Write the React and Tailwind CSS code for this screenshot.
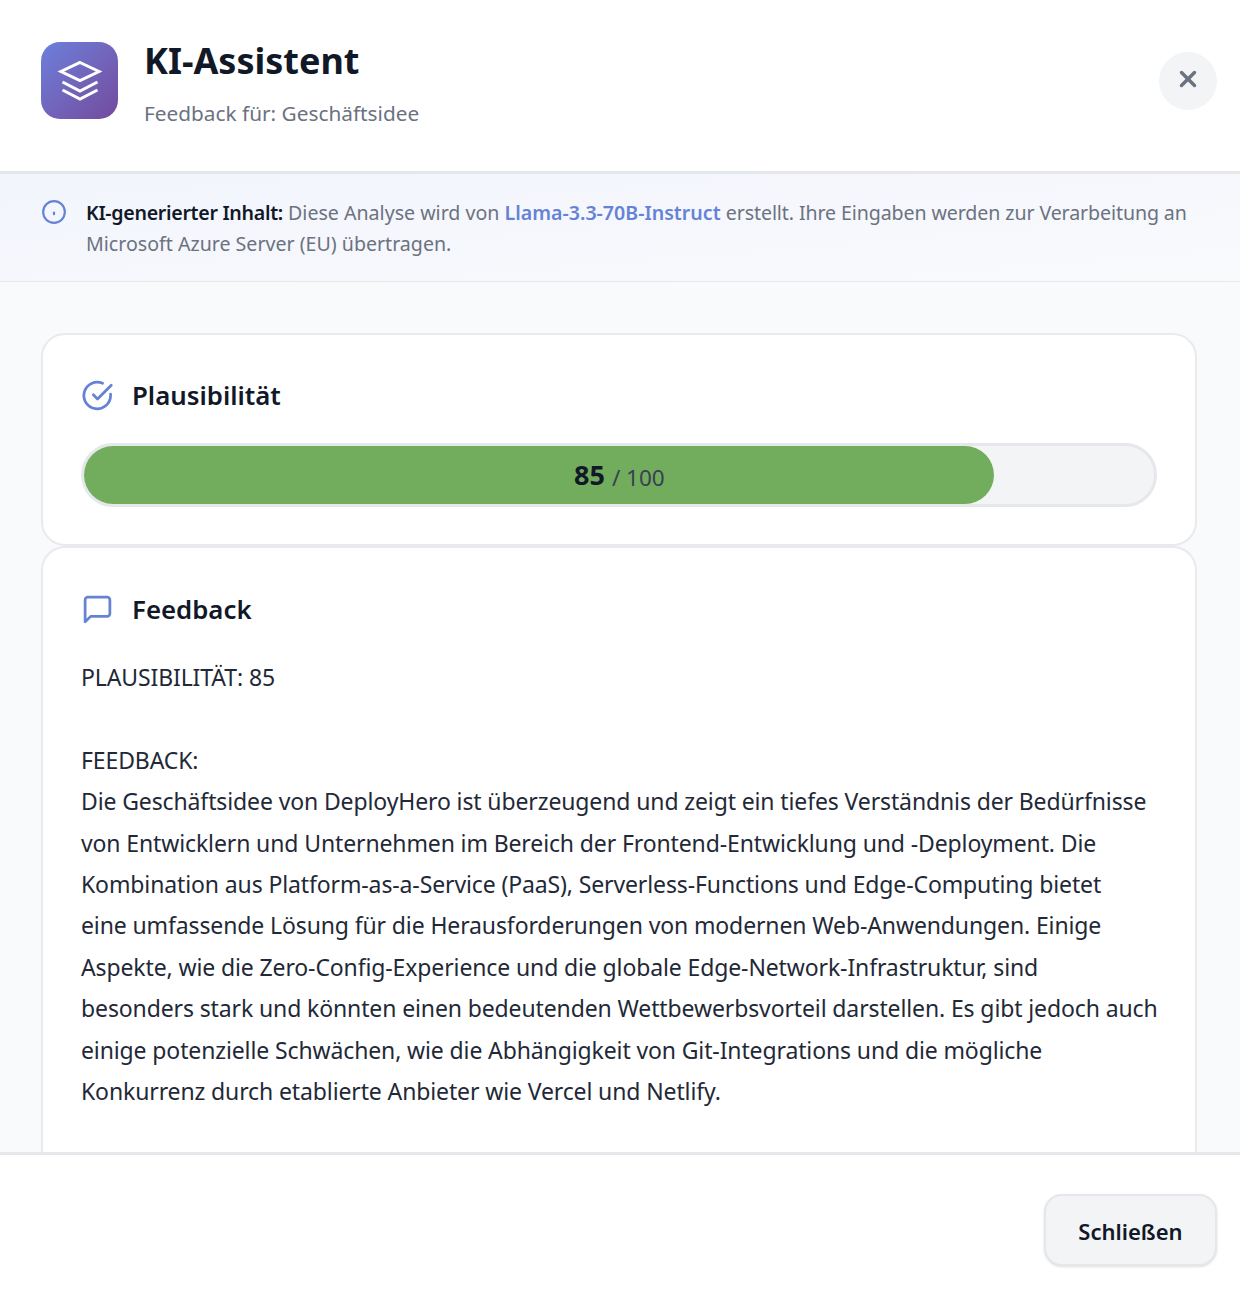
const feedbackLines = [
  "Die Geschäftsidee von DeployHero ist überzeugend und zeigt ein tiefes Verständnis der Bedürfnisse",
  "von Entwicklern und Unternehmen im Bereich der Frontend-Entwicklung und -Deployment. Die",
  "Kombination aus Platform-as-a-Service (PaaS), Serverless-Functions und Edge-Computing bietet",
  "eine umfassende Lösung für die Herausforderungen von modernen Web-Anwendungen. Einige",
  "Aspekte, wie die Zero-Config-Experience und die globale Edge-Network-Infrastruktur, sind",
  "besonders stark und könnten einen bedeutenden Wettbewerbsvorteil darstellen. Es gibt jedoch auch",
  "einige potenzielle Schwächen, wie die Abhängigkeit von Git-Integrations und die mögliche",
  "Konkurrenz durch etablierte Anbieter wie Vercel und Netlify.",
];

function LayersIcon() {
  return (
    <svg width="46" height="46" viewBox="0 0 46 46" fill="none" stroke="white" strokeWidth="3">
      <path d="M23 4.5 L42 13.5 L23 22.5 L4 13.5 Z" />
      <path d="M5.5 24 L23 33 L40.5 24" />
      <path d="M5.5 32 L23 41 L40.5 32" />
    </svg>
  );
}

function CheckCircleIcon() {
  return (
    <svg width="33" height="33" viewBox="0 0 24 24" fill="none" stroke="#6583d6" strokeWidth="2" strokeLinecap="round" strokeLinejoin="round">
      <path d="M21.5 11v1a9.7 9.7 0 1 1-5.8-8.9" />
      <path d="M22 4.5 12 14.5l-3-3" />
    </svg>
  );
}

function BubbleIcon() {
  return (
    <svg width="33" height="33" viewBox="0 0 24 24" fill="none" stroke="#6583d6" strokeWidth="2" strokeLinecap="round" strokeLinejoin="round">
      <path d="M21 15a2 2 0 0 1-2 2H7l-4 4V5a2 2 0 0 1 2-2h14a2 2 0 0 1 2 2z" />
    </svg>
  );
}

function InfoIcon() {
  return (
    <svg width="26" height="26" viewBox="0 0 24 24" fill="none" stroke="#6583d6" strokeWidth="2" strokeLinecap="round">
      <circle cx="12" cy="12" r="10" />
      <path d="M12 12.5v1.5" />
    </svg>
  );
}

function CloseIcon() {
  return (
    <svg width="26" height="26" viewBox="0 0 24 24" fill="none" stroke="#6b7280" strokeWidth="3.2" strokeLinecap="round">
      <path d="M18 6 6 18" />
      <path d="m6 6 12 12" />
    </svg>
  );
}

export default function App() {
  return (
    <div className="flex h-[1298px] flex-col overflow-hidden bg-white font-['Noto_Sans',sans-serif] text-[#111827]">
      {/* header */}
      <div className="flex h-[174px] shrink-0 items-center justify-between border-b-[3px] border-[#e5e7eb] pb-[10px] pl-[41px] pr-[23px]">
        <div className="flex items-center gap-[26px]">
          <div className="flex h-[77px] w-[77px] items-center justify-center rounded-[19px] bg-gradient-to-br from-[#6b80dc] to-[#724a9c]">
            <LayersIcon />
          </div>
          <div className="pt-[5px]">
            <h1 className="text-[36px] leading-[44px] font-bold">KI-Assistent</h1>
            <p className="mt-[16px] text-[20.8px] leading-[28px] text-[#6b7280]">Feedback für: Geschäftsidee</p>
          </div>
        </div>
        <button className="flex h-[58px] w-[58px] items-center justify-center rounded-full bg-[#f3f4f6] pb-[3px]">
          <CloseIcon />
        </button>
      </div>

      {/* info banner */}
      <div className="flex h-[108px] shrink-0 gap-[19px] border-b border-[#e5e7eb] bg-gradient-to-br from-[#f2f5fd] to-[#f9fafc] pl-[41px] pr-[40px] pt-[23px]">
        <div className="shrink-0 pt-[2px]">
          <InfoIcon />
        </div>
        <p className="text-[19.6px] leading-[31px] text-[#6b7280]">
          <strong className="font-semibold tracking-[-0.3px] text-[#111827]">KI-generierter Inhalt:</strong> Diese Analyse wird von{" "}
          <span className="font-semibold text-[#6583d6]">Llama-3.3-70B-Instruct</span>{" "}
          <span className="tracking-[-0.1px]">erstellt. Ihre Eingaben werden zur Verarbeitung an</span> Microsoft Azure Server (EU) übertragen.
        </p>
      </div>

      {/* scrolling content */}
      <div className="min-h-0 flex-1 overflow-hidden bg-[#f9fafb] pl-[41px] pr-[43px] pt-[51px]">
        <div className="h-[213px] rounded-[24px] border-2 border-[#e9eaee] bg-white px-[38px] pt-[41px]">
          <div className="flex items-center gap-[18px]">
            <CheckCircleIcon />
            <h2 className="text-[25.8px] leading-[38px] font-semibold">Plausibilität</h2>
          </div>
          <div className="mt-[29px] h-[64px] rounded-full border-[3px] border-[#e5e7eb] bg-[#f3f4f6]">
            <div className="relative h-full w-[85%] rounded-full bg-[#72ad5e]">
              <div className="absolute left-[490px] top-0 flex h-full items-center gap-[7px] whitespace-nowrap">
                <span className="text-[27px] font-bold">85</span>
                <span className="mt-[5px] text-[22.5px] text-[#374151]">/ 100</span>
              </div>
            </div>
          </div>
        </div>

        <div className="rounded-t-[24px] border-2 border-b-0 border-[#e9eaee] bg-white px-[38px] pt-[42px] pb-[70px]">
          <div className="flex items-center gap-[18px]">
            <BubbleIcon />
            <h2 className="text-[25.8px] leading-[38px] font-semibold">Feedback</h2>
          </div>
          <div className="mt-[29px] whitespace-nowrap text-[23px] leading-[41.4px] tracking-[-0.12px] text-[#1f2937]">
            <p>PLAUSIBILITÄT: 85</p>
            <p className="mt-[41.4px]">FEEDBACK:</p>
            {feedbackLines.map((line) => (
              <p key={line}>{line}</p>
            ))}
          </div>
        </div>
      </div>

      {/* footer */}
      <div className="flex h-[146px] shrink-0 justify-end border-t-[3px] border-[#e5e7eb] pr-[23px] pt-[39px]">
        <button className="h-[72px] w-[173px] rounded-[18px] border-2 border-[#e5e7eb] bg-[#f3f4f6] pt-[2px] text-[22px] font-semibold shadow-sm">
          Schließen
        </button>
      </div>
    </div>
  );
}
